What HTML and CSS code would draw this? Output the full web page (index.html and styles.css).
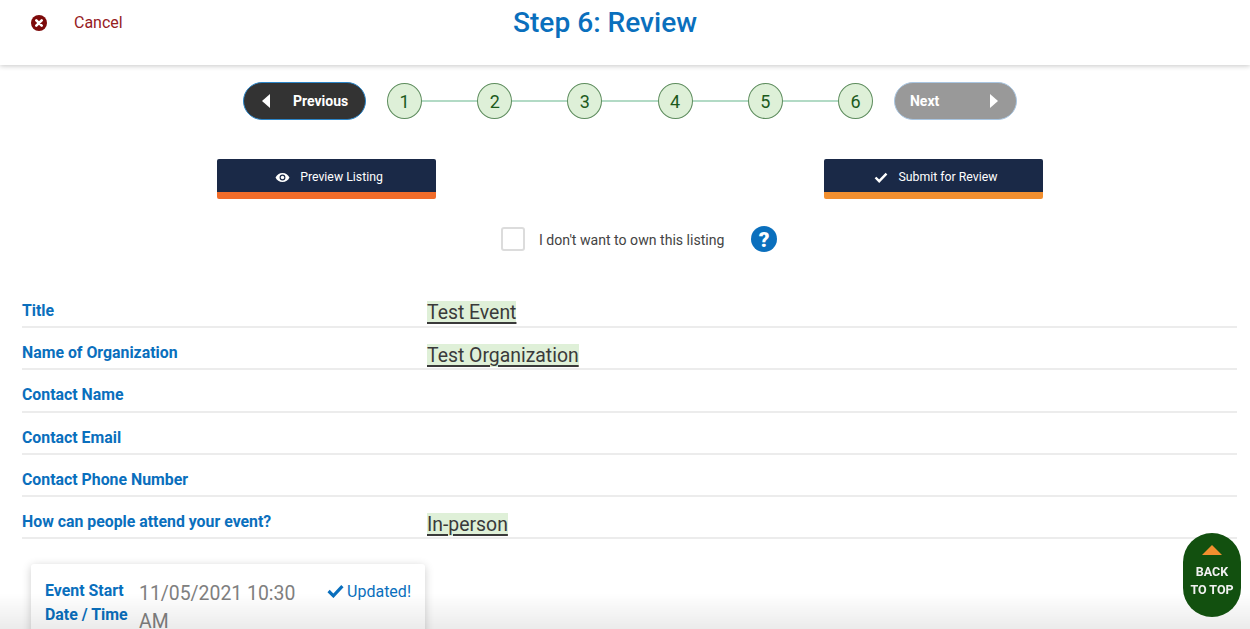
FILE: index.html
```html
<!DOCTYPE html>
<html lang="en">
<head>
<meta charset="utf-8">
<title>Step 6: Review</title>
<link rel="stylesheet" href="styles.css">
</head>
<body>
<header class="topbar">
  <a class="cancel">
    <svg class="cancel-icon" viewBox="0 0 16 16"><circle cx="8" cy="8" r="8" fill="#7d0a0a"/><path d="M5.300 5.300l5.400 5.400M10.700 5.300l-5.400 5.400" stroke="#fff" stroke-width="2.600" stroke-linecap="round"/></svg>
    <span>Cancel</span>
  </a>
  <h1 class="page-title">Step 6: Review</h1>
</header>

<nav class="stepper">
  <a class="pill pill-prev">
    <svg class="arrow" viewBox="0 0 8 14"><path d="M8 0v14L0 7z" fill="#fff"/></svg>
    <span>Previous</span>
  </a>
  <ol class="steps">
    <li class="step">1</li><li class="line"></li>
    <li class="step">2</li><li class="line"></li>
    <li class="step">3</li><li class="line"></li>
    <li class="step">4</li><li class="line"></li>
    <li class="step">5</li><li class="line"></li>
    <li class="step">6</li>
  </ol>
  <a class="pill pill-next">
    <span>Next</span>
    <svg class="arrow" viewBox="0 0 8 14"><path d="M0 0v14L8 7z" fill="#fff"/></svg>
  </a>
</nav>

<div class="actions">
  <a class="action action-preview">
    <svg class="eye" viewBox="0 0 16 12"><path fill-rule="evenodd" d="M8 1C4.600 1 1.800 3 .4 6c1.400 3 4.200 5 7.600 5s6.200-2 7.600-5C14.200 3 11.400 1 8 1zm0 8.200A3.200 3.200 0 1 1 8 2.800a3.200 3.200 0 0 1 0 6.400z" fill="#fff"/><circle cx="8" cy="6" r="1.900" fill="#fff"/></svg>
    <span>Preview Listing</span>
  </a>
  <a class="action action-submit">
    <svg class="check" viewBox="0 0 14 11"><path d="M1.500 5.500l3.700 3.700 7.300-7.500" fill="none" stroke="#fff" stroke-width="2.400"/></svg>
    <span>Submit for Review</span>
  </a>
</div>

<div class="ownership">
  <span class="checkbox"></span>
  <span class="ownership-label">I don't want to own this listing</span>
  <svg class="help" viewBox="0 0 26 26"><circle cx="13" cy="13" r="13" fill="#0a6fbd"/><text x="13" y="20.500" text-anchor="middle" class="help-mark">?</text></svg>
</div>

<section class="fields">
  <div class="field"><div class="field-label">Title</div><div class="field-value"><mark>Test Event</mark></div></div>
  <div class="field"><div class="field-label">Name of Organization</div><div class="field-value"><mark>Test Organization</mark></div></div>
  <div class="field"><div class="field-label">Contact Name</div><div class="field-value"></div></div>
  <div class="field"><div class="field-label">Contact Email</div><div class="field-value"></div></div>
  <div class="field"><div class="field-label">Contact Phone Number</div><div class="field-value"></div></div>
  <div class="field"><div class="field-label">How can people attend your event?</div><div class="field-value"><mark>In-person</mark></div></div>
</section>

<section class="card">
  <div class="card-label">Event Start Date / Time</div>
  <div class="card-value">11/05/2021 10:30 AM</div>
  <div class="card-status">
    <svg class="status-check" viewBox="0 0 16 13"><path d="M1.500 6.500l4.500 4.500 8.500-9" fill="none" stroke="#0a6fbd" stroke-width="3"/></svg>
    <span>Updated!</span>
  </div>
</section>

<div class="bottom-fade"></div>

<a class="back-to-top">
  <svg class="top-arrow" viewBox="0 0 20 10"><path d="M10 0l10 10H0z" fill="#f28f2f"/></svg>
  <span>BACK<br>TO TOP</span>
</a>
</body>
</html>
```
FILE: styles.css
```css
* { box-sizing: border-box; }
html, body { height: 100%; }
body {
  margin: 0;
  height: 629px;
  overflow: hidden;
  background: #fff;
  font-family: Roboto, "Liberation Sans", sans-serif;
  color: #3a3a3a;
}
.topbar {
  height: 65px;
  display: flex;
  padding: 0 0 0 31px;
  background: #fff;
  box-shadow: 0 1px 5px rgba(0, 0, 0, .22);
}
.cancel {
  width: 482px;
  height: 45px;
  display: flex;
  align-items: center;
  gap: 27px;
  color: #96201e;
  font-size: 16px;
}
.cancel-icon { width: 16px; height: 16px; }
.page-title {
  margin: 0;
  height: 45px;
  line-height: 45px;
  font-size: 28.100px;
  font-weight: 500;
  color: #0a6fbd;
}
.stepper {
  display: flex;
  align-items: center;
  height: 38px;
  margin: 17px 0 0 243px;
}
.pill {
  width: 123px;
  height: 38px;
  border-radius: 19px;
  display: flex;
  align-items: center;
  color: #fff;
  font-size: 14px;
  font-weight: 700;
}
.pill-prev {
  background: #333;
  border: 1.500px solid #2b85c8;
  padding-left: 18px;
  gap: 23px;
}
.pill-next {
  background: #999;
  border: 1.500px solid #a9c6e2;
  padding: 0 18px 0 15px;
  justify-content: space-between;
}
.arrow { width: 8px; height: 14px; }
.steps {
  display: flex;
  align-items: center;
  list-style: none;
  margin: 0 21px;
  padding: 0;
}
.step {
  width: 35px;
  height: 36px;
  flex: none;
  border-radius: 50%;
  border: 1.500px solid #5d8c5d;
  background: #def0d8;
  color: #1c5a1c;
  font-size: 18px;
  display: flex;
  align-items: center;
  justify-content: center;
}
.line {
  width: 55.200px;
  height: 2px;
  background: #b2dac5;
}
.actions {
  display: flex;
  justify-content: space-between;
  width: 826px;
  margin: 39px 0 0 217px;
}
.action {
  width: 219px;
  height: 40px;
  display: flex;
  align-items: center;
  justify-content: center;
  gap: 10px;
  padding: 3px 0 0 5px;
  background: #1a2947;
  border-radius: 2px;
  color: #fff;
  font-size: 12.300px;
}
.action-preview { border-bottom: 7px solid #f16c2a; }
.action-submit { border-bottom: 7px solid #f28f2f; }
.eye { width: 15px; height: 11px; }
.check { width: 14px; height: 11px; }
.ownership {
  display: flex;
  align-items: center;
  height: 26px;
  margin: 27px 0 0 501px;
}
.checkbox {
  width: 24px;
  height: 24px;
  border: 2px solid #dcdcdc;
  border-radius: 3px;
  background: #fff;
}
.ownership-label {
  margin-left: 14px;
  padding-top: 2px;
  width: 212px;
  font-size: 14.100px;
  color: #444;
}
.help { width: 26px; height: 26px; }
.help-mark {
  font-family: Roboto, sans-serif;
  font-size: 21px;
  font-weight: 900;
  fill: #fff;
}
.fields { margin: 32px 13px 0 22px; }
.field {
  height: 42.300px;
  display: flex;
  border-bottom: 2px solid #ececec;
}
.field:first-child { height: 44px; }
.field-label {
  width: 405px;
  padding-top: 13px;
  font-size: 15.850px;
  line-height: 24px;
  font-weight: 700;
  color: #0a6fbd;
}
.field:first-child .field-label { padding-top: 15px; }
.field-value {
  font-size: 19.400px;
  line-height: 24px;
  padding-top: 16px;
}
.field:first-child .field-value { padding-top: 17px; }
.field-value mark {
  background: #dff0d8;
  color: #3a3a3a;
  text-decoration: underline;
  text-decoration-thickness: 1.500px;
  text-underline-offset: 3px;
}
.card {
  width: 394px;
  height: 100px;
  margin: 25px 0 0 31px;
  padding: 15px 14px 0;
  display: grid;
  grid-template-columns: 94px 172px 1fr;
  background: #fff;
  border-radius: 3px;
  box-shadow: 0 2px 10px rgba(0, 0, 0, .2);
}
.card-label {
  font-size: 15.900px;
  line-height: 24px;
  font-weight: 700;
  color: #0a6fbd;
}
.card-value {
  padding-top: 1px;
  font-size: 19.400px;
  line-height: 28px;
  color: #808080;
}
.card-status {
  display: flex;
  justify-content: flex-end;
  gap: 3px;
  height: 24px;
  align-items: center;
  font-size: 16px;
  color: #0a6fbd;
}
.status-check { width: 17px; height: 14px; flex: none; }
.bottom-fade {
  position: fixed;
  left: 0;
  right: 0;
  bottom: 0;
  height: 36px;
  background: linear-gradient(rgba(0, 0, 0, 0), rgba(0, 0, 0, .08));
  pointer-events: none;
}
.back-to-top {
  position: fixed;
  left: 1183px;
  top: 533px;
  width: 58px;
  height: 84px;
  border-radius: 29px;
  background: #12500f;
  color: #f1f1f1;
  font-size: 12.500px;
  font-weight: 700;
  line-height: 18px;
  text-align: center;
  display: flex;
  flex-direction: column;
  align-items: center;
  padding-top: 12px;
}
.top-arrow { width: 20px; height: 10px; margin-bottom: 8px; }
```
